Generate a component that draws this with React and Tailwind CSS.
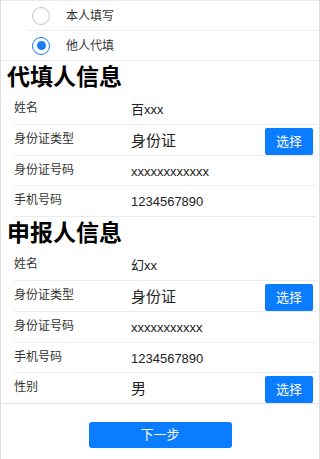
const font = { fontFamily: '"Liberation Sans", "Noto Sans CJK SC", sans-serif' };

const Radio = ({ checked }) =>
  checked ? (
    <span className="flex h-[18px] w-[18px] shrink-0 items-center justify-center rounded-full border-[1.5px] border-[#1a7cf5]">
      <span className="block h-[9px] w-[9px] rounded-full bg-[#1a7cf5]"></span>
    </span>
  ) : (
    <span className="block h-[18px] w-[18px] shrink-0 rounded-full border border-[#c4c4c4]"></span>
  );

const Row = ({ label, value, big, pick, h, last }) => (
  <div className={`flex items-center ${h} ${last ? '' : 'border-b border-[#ececec]'} ml-[13px] mr-[2px] pr-[4px]`}>
    <div className="w-[117px] text-[12px] text-[#333] mb-[2px]">{label}</div>
    <div className={`flex-1 text-[#222] mt-[2px] ${big ? 'text-[15px]' : 'text-[13px]'}`}>{value}</div>
    {pick && (
      <button className="h-[27px] w-[48px] mt-[3px] rounded-[2px] bg-[#0a7cff] text-[13px] text-white">选择</button>
    )}
  </div>
);

const Heading = ({ children }) => (
  <h2 className="h-[32px] pl-[6px] text-[23px] font-bold leading-[32px] text-black">{children}</h2>
);

export default function App() {
  return (
    <div style={font} className="h-[459px] w-[320px] border-x border-[#dedede] bg-white">
      <div className="border-t border-b border-[#ececec]">
        <div className="ml-[26px] flex h-[30px] items-center border-b border-[#ececec]">
          <span className="ml-[5px]"><Radio /></span>
          <span className="ml-[16px] text-[12px] text-[#333]">本人填写</span>
        </div>
        <div className="ml-[26px] flex h-[29px] items-center">
          <span className="ml-[5px]"><Radio checked /></span>
          <span className="ml-[16px] text-[12px] text-[#333]">他人代填</span>
        </div>
      </div>

      <Heading>代填人信息</Heading>
      <Row label="姓名" value="百xxx" h="h-[32px]" />
      <Row label="身份证类型" value="身份证" big pick h="h-[31px]" />
      <Row label="身份证号码" value="xxxxxxxxxxxx" h="h-[30px]" />
      <Row label="手机号码" value="1234567890" h="h-[31px]" />

      <Heading>申报人信息</Heading>
      <div className="border-b border-[#e4e4e4]">
        <Row label="姓名" value="幻xx" h="h-[32px]" />
        <Row label="身份证类型" value="身份证" big pick h="h-[31px]" />
        <Row label="身份证号码" value="xxxxxxxxxxx" h="h-[31px]" />
        <Row label="手机号码" value="1234567890" h="h-[30px]" />
        <Row label="性别" value="男" big pick h="h-[30px]" last />
      </div>

      <div className="flex justify-center pt-[18px]">
        <button className="h-[26px] w-[143px] rounded-[3px] bg-[#0a7cff] text-[13px] text-white">下一步</button>
      </div>
    </div>
  );
}
